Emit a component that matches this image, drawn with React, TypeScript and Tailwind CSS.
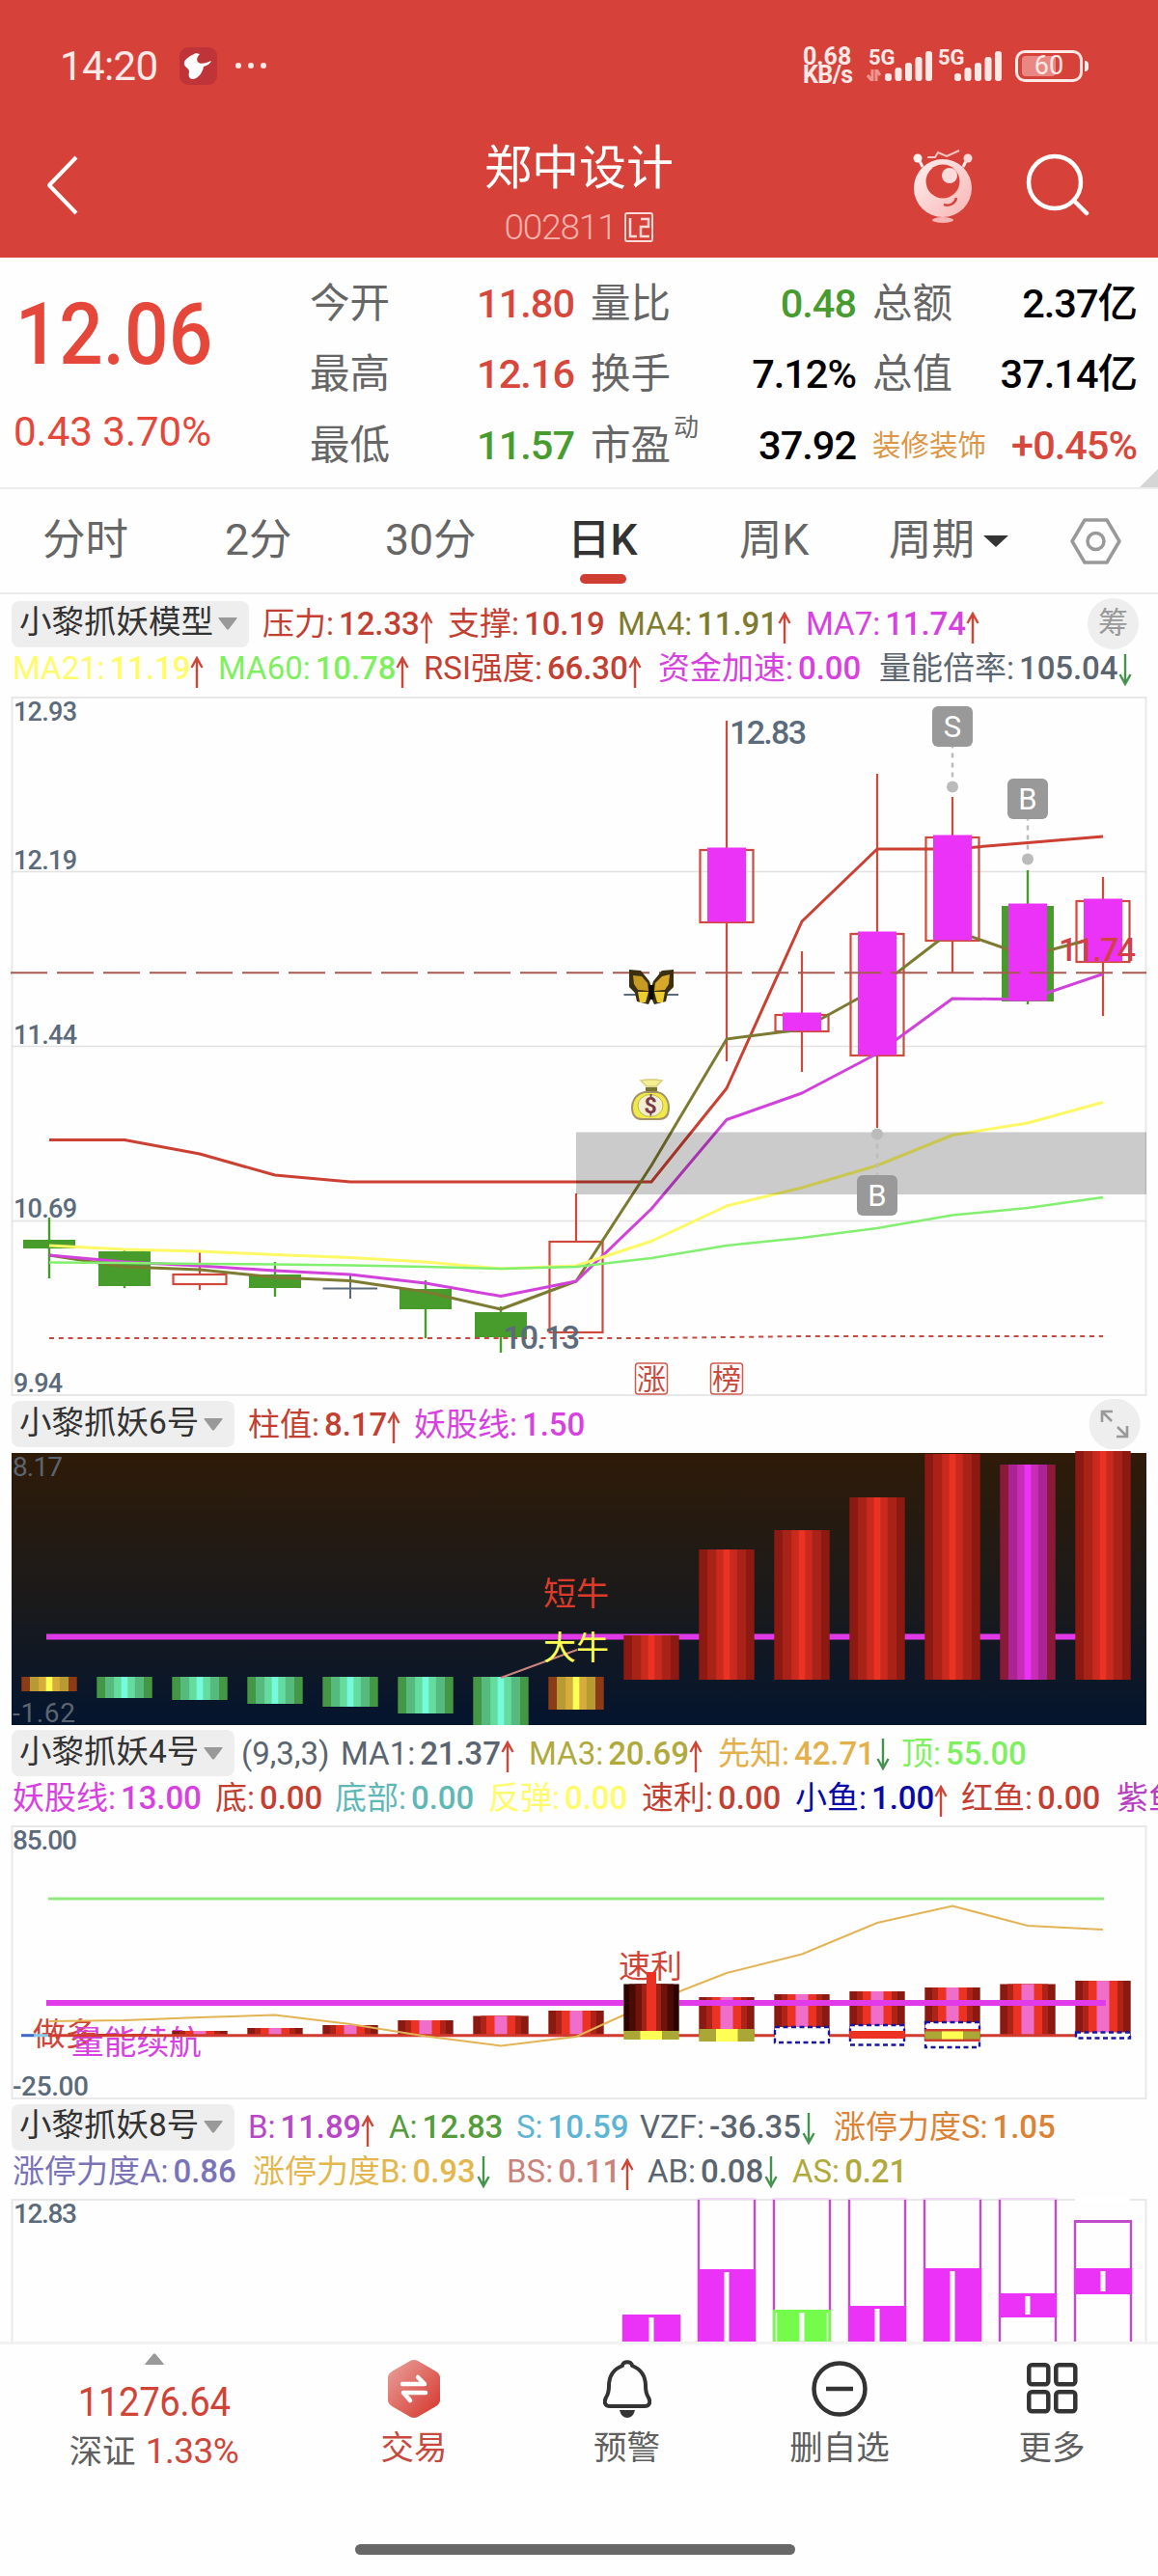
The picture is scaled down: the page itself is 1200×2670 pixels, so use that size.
import type { ReactNode } from "react";

const FONT = "font-[Roboto,'Noto_Sans_CJK_SC',sans-serif]";

type Indicator = {
  label: string;
  value?: string;
  color: string;
  width: string;
  trend?: "up" | "down";
};

const mainRow1: Indicator[] = [
  { label: "压力", value: "12.33", color: "text-[#c23f31]", width: "w-[192px]", trend: "up" },
  { label: "支撑", value: "10.19", color: "text-[#c23f31]", width: "w-[176px]" },
  { label: "MA4", value: "11.91", color: "text-[#7f7b2e]", width: "w-[195px]", trend: "up" },
  { label: "MA7", value: "11.74", color: "text-[#d641df]", width: "w-[200px]", trend: "up" },
];

const mainRow2: Indicator[] = [
  { label: "MA21", value: "11.19", color: "text-[#fffb6a]", width: "w-[213px]", trend: "up" },
  { label: "MA60", value: "10.78", color: "text-[#7ef060]", width: "w-[213px]", trend: "up" },
  { label: "RSI强度", value: "66.30", color: "text-[#c23f31]", width: "w-[243px]", trend: "up" },
  { label: "资金加速", value: "0.00", color: "text-[#d641df]", width: "w-[229px]" },
  { label: "量能倍率", value: "105.04", color: "text-[#5b6570]", width: "w-[270px]", trend: "down" },
];

const sixRow: Indicator[] = [
  { label: "柱值", value: "8.17", color: "text-[#c23f31]", width: "w-[172px]", trend: "up" },
  { label: "妖股线", value: "1.50", color: "text-[#d641df]", width: "w-[190px]" },
];

const fourRow1: Indicator[] = [
  { label: "(9,3,3)", color: "text-[#5b6570]", width: "w-[103px]" },
  { label: "MA1", value: "21.37", color: "text-[#5b6570]", width: "w-[195px]", trend: "up" },
  { label: "MA3", value: "20.69", color: "text-[#b0a93c]", width: "w-[196px]", trend: "up" },
  { label: "先知", value: "42.71", color: "text-[#e3b04b]", width: "w-[190px]", trend: "down" },
  { label: "顶", value: "55.00", color: "text-[#7ef060]", width: "w-[140px]" },
];

const fourRow2: Indicator[] = [
  { label: "妖股线", value: "13.00", color: "text-[#d641df]", width: "w-[210px]" },
  { label: "底", value: "0.00", color: "text-[#c23f31]", width: "w-[124px]" },
  { label: "底部", value: "0.00", color: "text-[#5fb8b5]", width: "w-[159px]" },
  { label: "反弹", value: "0.00", color: "text-[#fffb6a]", width: "w-[159px]" },
  { label: "速利", value: "0.00", color: "text-[#c23f31]", width: "w-[159px]" },
  { label: "小鱼", value: "1.00", color: "text-[#0a0aa5]", width: "w-[172px]", trend: "up" },
  { label: "红鱼", value: "0.00", color: "text-[#c23f31]", width: "w-[161px]" },
  { label: "紫鱼", color: "text-[#b83fc4]", width: "w-[161px]" },
];

const eightRow1: Indicator[] = [
  { label: "B", value: "11.89", color: "text-[#b946c6]", width: "w-[146px]", trend: "up" },
  { label: "A", value: "12.83", color: "text-[#569c3d]", width: "w-[132px]" },
  { label: "S", value: "10.59", color: "text-[#5db5d3]", width: "w-[128px]" },
  { label: "VZF", value: "-36.35", color: "text-[#5b6570]", width: "w-[201px]", trend: "down" },
  { label: "涨停力度S", value: "1.05", color: "text-[#dc8234]", width: "w-[240px]" },
];

const eightRow2: Indicator[] = [
  { label: "涨停力度A", value: "0.86", color: "text-[#7b73b8]", width: "w-[249px]" },
  { label: "涨停力度B", value: "0.93", color: "text-[#e3b74e]", width: "w-[263px]", trend: "down" },
  { label: "BS", value: "0.11", color: "text-[#cb827a]", width: "w-[146px]", trend: "up" },
  { label: "AB", value: "0.08", color: "text-[#5b6570]", width: "w-[150px]", trend: "down" },
  { label: "AS", value: "0.21", color: "text-[#b0a93c]", width: "w-[130px]" },
];

// centre of the n-th trading day column
const cx = (i: number) => 51 + 78 * i;

const toPoints = (ys: number[]) => ys.map((y, i) => `${cx(i)},${y}`).join(" ");

function TrendArrow({ trend }: { trend: "up" | "down" }) {
  return trend === "up" ? (
    <svg width="14" height="34" viewBox="0 0 14 34" fill="none" stroke="#cf4537" strokeWidth="2.4" className="mt-2 shrink-0">
      <path d="M7 33V2M1.5 12L7 2L12.5 12" />
    </svg>
  ) : (
    <svg width="14" height="34" viewBox="0 0 14 34" fill="none" stroke="#469350" strokeWidth="2.4" className="ml-px mt-1 shrink-0">
      <path d="M7 0V31M1.5 21L7 31L12.5 21" />
    </svg>
  );
}

function IndicatorItem({ item }: { item: Indicator }) {
  return (
    <div className={`flex h-[46px] shrink-0 items-center whitespace-nowrap ${item.width} ${item.color}`}>
      <span>{item.value ? `${item.label}:` : item.label}</span>
      {item.value && <span className="ml-[5px] font-medium tracking-[-0.1px]">{item.value}</span>}
      {item.trend && <TrendArrow trend={item.trend} />}
    </div>
  );
}

function Chip({ name, wide }: { name: string; wide?: boolean }) {
  return (
    <div
      className={`mr-[14px] flex h-12 shrink-0 items-center gap-[5px] rounded-lg bg-[#eee] pl-[8px] text-[#333] ${
        wide ? "w-[246px]" : "w-[231px]"
      }`}
    >
      <span className="whitespace-nowrap pb-[3px] text-[33.5px]">{name}</span>
      <svg width="20" height="13" viewBox="0 0 20 13" fill="#999">
        <path d="M1 0H19Q20 0 19.5 1L11 12.2Q10 13 9 12.2L.5 1Q0 0 1 0Z" />
      </svg>
    </div>
  );
}

function Legend({ className, children }: { className: string; children: ReactNode }) {
  return <div className={`overflow-hidden pl-3 text-[33px] leading-none ${className}`}>{children}</div>;
}

function Signal() {
  return (
    <svg width="49" height="31" viewBox="0 0 49 31" fill="#ffe9e7">
      <rect x="0" y="23" width="7" height="8" rx="3" />
      <rect x="10.5" y="17" width="7" height="14" rx="3" />
      <rect x="21" y="12" width="7" height="19" rx="3" />
      <rect x="31.5" y="6" width="7" height="25" rx="3" />
      <rect x="42" y="0" width="7" height="31" rx="3" />
    </svg>
  );
}

function StatusBar() {
  return (
    <div className="flex h-[136px] items-center pl-[62px] text-[#ffe9e7]">
      <span className="w-[124px] text-[42px] tracking-[-0.6px]">14:20</span>
      <svg width="39" height="39" viewBox="0 0 39 39">
        <rect width="39" height="39" rx="9" fill="#bf3438" />
        <path d="M17 6C9 10 4 13 5 18c1 3 5 4 5 7-1 5 0 8 4 8 6-1 10-7 11-13 4-1 7-3 8-6-5 2-10 4-13 2-3-2-2-6 1-9Z" fill="#fff" />
      </svg>
      <div className="ml-[19px] flex gap-[7px]">
        <i className="size-[6px] rounded-full bg-[#ffe9e7]" />
        <i className="size-[6px] rounded-full bg-[#ffe9e7]" />
        <i className="size-[6px] rounded-full bg-[#ffe9e7]" />
      </div>
      <div className="ml-[556px] w-[65px] text-[25px] font-bold leading-[19px]">
        <div>0.68</div>
        <div className="tracking-[-0.6px]">KB/s</div>
      </div>
      <div className="relative ml-[20px] w-[49px]">
        <Signal />
        <span className="absolute -left-[17px] -top-[4px] text-[22px] font-bold leading-[22px]">5G</span>
        <svg width="15" height="12" viewBox="0 0 15 12" className="absolute -left-[19px] bottom-0" fill="none" stroke="#ee9590" strokeWidth="3">
          <path d="M6 0V12L1 6M10 12V0L14 6" />
        </svg>
      </div>
      <div className="relative ml-[23px] w-[49px]">
        <Signal />
        <span className="absolute -left-[17px] -top-[4px] text-[22px] font-bold leading-[22px]">5G</span>
      </div>
      <div className="relative ml-[14px] flex h-[33px] w-[70px] items-center justify-center rounded-[10px] border-[3px] border-[#ffe9e7]">
        <i className="absolute left-[4px] top-[3px] h-[21px] w-[35px] rounded-[4px] bg-[#e98782]" />
        <span className="relative text-[27px] leading-none">60</span>
      </div>
      <i className="ml-[2px] h-[11px] w-[4px] rounded-r bg-[#ffe9e7]" />
    </div>
  );
}

function Mascot() {
  return (
    <svg width="64" height="78" viewBox="0 0 64 78">
      <defs>
        <linearGradient id="mascot" x1="0" y1="0" x2="1" y2="1">
          <stop offset="0" stopColor="#fff1f0" />
          <stop offset="1" stopColor="#f7b5b4" />
        </linearGradient>
      </defs>
      <path d="M16 8L24 8L27 3L36 7L49 1" fill="none" stroke="#f9c6c3" strokeWidth="2" />
      <path d="M6 8L11 18M58 8L53 18" stroke="#fdeceb" strokeWidth="3" />
      <ellipse cx="6" cy="9" rx="4.5" ry="4.5" fill="#fff1f0" />
      <ellipse cx="58" cy="9" rx="4.5" ry="4.5" fill="#fdd9d7" />
      <circle cx="32" cy="40" r="30" fill="url(#mascot)" />
      <circle cx="32" cy="33" r="17.5" fill="#d7443c" />
      <circle cx="39" cy="27" r="8" fill="#fbdcdb" />
      <path d="M33 57C39 59 45 56 46 50" fill="none" stroke="#d7443c" strokeWidth="2.5" />
      <ellipse cx="32" cy="73" rx="11" ry="3" fill="#f7b5b4" />
    </svg>
  );
}

function TitleBar() {
  return (
    <div className="flex h-[131px] items-center text-white">
      <svg width="33" height="62" viewBox="0 0 33 62" fill="none" stroke="#fff" strokeWidth="4" className="ml-12 mt-[-20px]">
        <path d="M31 2L3 31L31 60" strokeLinejoin="round" />
      </svg>
      <div className="ml-[361px] w-[316px]">
        <div className="flex flex-col items-center">
          <h1 className="mt-[-5px] text-[49px] leading-[60px]">郑中设计</h1>
          <div className="mt-[12px] flex items-center text-[#f4b0ab]">
            <span className="text-[37px] font-light leading-none tracking-[-1.2px]">002811</span>
            <svg width="30" height="31" viewBox="0 0 30 31" fill="none" stroke="#fbdad7" className="ml-[9px]">
              <rect x="1" y="1" width="28" height="29" rx="2" strokeWidth="2" />
              <path d="M6 6V25H13M17 7H25V15H17V25H26" strokeWidth="2.5" />
            </svg>
          </div>
        </div>
      </div>
      <div className="ml-auto mr-[54px] mt-[-15px]">
        <Mascot />
      </div>
      <svg width="66" height="66" viewBox="0 0 66 66" fill="none" stroke="#fff" strokeWidth="4.5" className="mr-[71px] mt-[-19px]">
        <circle cx="30" cy="30" r="27" />
        <path d="M50 49L63 62" strokeLinecap="round" />
      </svg>
    </div>
  );
}

const quotes = [
  { rows: ["今开", "最高", "最低"], values: ["11.80", "12.16", "11.57"], colors: ["text-[#d8473b]", "text-[#d8473b]", "text-[#489c2f]"], box: "w-[274px]" },
  { rows: ["量比", "换手", "市盈"], values: ["0.48", "7.12%", "37.92"], colors: ["text-[#489c2f]", "text-black", "text-black"], box: "w-[275px]" },
  { rows: ["总额", "总值", "装修装饰"], values: ["2.37亿", "37.14亿", "+0.45%"], colors: ["text-black", "text-black", "text-[#d8473b]"], box: "w-[274px]" },
];

function QuotePanel() {
  return (
    <section className="relative flex h-[240px] border-b-2 border-[#ebebeb]">
      <div className="w-[321px] pl-[14px] text-[#e5473a]">
        <div className="mt-[30px] w-[230px] origin-left scale-x-[0.9] pl-[2px] text-[89px] font-medium leading-[100px]">12.06</div>
        <div className="mt-[26px] whitespace-nowrap text-[42px] leading-[50px]">0.43 3.70%</div>
      </div>
      <div className="flex gap-[17px] pt-[11px]">
        {quotes.map((col) => (
          <div key={col.rows[0]} className={col.box}>
            {col.rows.map((label, i) => (
              <div key={label} className="flex h-[73.5px] items-center justify-between whitespace-nowrap text-[41.5px]">
                {label.length > 2 ? (
                  <span className="text-[29.5px] text-[#dc9646]">{label}</span>
                ) : (
                  <span className="flex text-[#666]">
                    {label}
                    {label === "市盈" && <sup className="top-[12px] ml-[3px] text-[26px]">动</sup>}
                  </span>
                )}
                <span className={`font-medium tracking-[-1px] ${col.colors[i]}`}>{col.values[i]}</span>
              </div>
            ))}
          </div>
        ))}
      </div>
      <svg width="19" height="19" viewBox="0 0 19 19" className="absolute bottom-0 right-0">
        <path d="M19 0V19H0Z" fill="#d5d5d5" />
      </svg>
    </section>
  );
}

const tabs = [
  { name: "分时", width: "w-[189px]" },
  { name: "2分", width: "w-[166px]" },
  { name: "30分", width: "w-[189px]" },
  { name: "日K", width: "w-[178px]" },
  { name: "周K", width: "w-[155px]" },
  { name: "周期", width: "w-[98px]" },
];

function Tabs() {
  return (
    <nav className="flex h-[109px] items-center border-b-2 border-[#ebebeb] pl-[44px] text-[44.5px] text-[#666]">
      {tabs.map((tab) => (
        <div key={tab.name} className={`relative whitespace-nowrap ${tab.width} ${tab.name === "日K" ? "font-medium text-[#333]" : ""}`}>
          {tab.name}
          {tab.name === "日K" && <i className="absolute left-[13px] top-[68px] h-[10px] w-12 rounded-[5px] bg-[#d03d33]" />}
        </div>
      ))}
      <svg width="26" height="12" viewBox="0 0 26 12" fill="#333">
        <path d="M0 0H26L13 12Z" />
      </svg>
      <svg width="53" height="48" viewBox="0 0 53 48" fill="none" stroke="#999" strokeWidth="3.5" className="ml-[64px]">
        <path d="M15 2H38L51 24L38 46H15L2 24Z" strokeLinejoin="round" />
        <circle cx="26.5" cy="24" r="8.5" />
      </svg>
    </nav>
  );
}

type Candle = { wick: [number, number]; body: [number, number]; kind: "green" | "hollow" | "magenta" | "flat" | "mixed" };

const candles: Candle[] = [
  { wick: [1262, 1325], body: [1285, 1294], kind: "green" },
  { wick: [1294, 1335], body: [1297, 1333], kind: "green" },
  { wick: [1298, 1337], body: [1321, 1331], kind: "hollow" },
  { wick: [1308, 1344], body: [1321, 1335], kind: "green" },
  { wick: [1322, 1346], body: [1335.5, 1336], kind: "flat" },
  { wick: [1327, 1387], body: [1336, 1357], kind: "green" },
  { wick: [1354, 1402], body: [1360, 1386], kind: "green" },
  { wick: [1237, 1287], body: [1287, 1381], kind: "hollow" },
  { wick: [1031, 1031], body: [1031, 1031], kind: "flat" },
  { wick: [747, 1100], body: [881, 956], kind: "magenta" },
  { wick: [986, 1111], body: [1052, 1069], kind: "magenta" },
  { wick: [802, 1169], body: [968, 1094], kind: "magenta" },
  { wick: [826, 1008], body: [868, 975], kind: "magenta" },
  { wick: [902, 1041], body: [939, 1038], kind: "mixed" },
  { wick: [909, 1053], body: [934, 997], kind: "magenta" },
];

const pressure = [1181.5, 1181.5, 1196, 1218, 1225, 1225, 1225, 1225, 1225, 1128, 955, 880, 880, 873.5, 867];
const ma4 = [1301, 1313, 1316, 1324, 1327.5, 1339, 1357, 1328, 1208, 1077, 1067, 1024, 964, 991, 970];
const ma7 = [1301, 1308, 1312, 1317, 1321, 1330, 1343.5, 1328, 1253, 1160.5, 1133, 1092, 1035, 1036, 1009.5];
const ma21 = [1291, 1295, 1297, 1300.5, 1303.5, 1308, 1315, 1312, 1286.5, 1250, 1231, 1208, 1176.5, 1164, 1142.5];
const ma60 = [1308.5, 1309, 1310, 1310.5, 1311.5, 1313, 1315, 1313, 1304, 1291, 1283, 1273, 1259.5, 1252, 1241];
const support = [1387, 1387, 1387, 1387, 1387, 1387, 1387, 1387, 1387, 1386, 1385, 1385, 1385, 1385, 1385];

const axisLabels = [
  { text: "12.93", y: 747 },
  { text: "12.19", y: 900.5 },
  { text: "11.44", y: 1082 },
  { text: "10.69", y: 1261.5 },
];

const marks = [
  { letter: "S", day: 12, y: 753, dot: 815.5 },
  { letter: "B", day: 13, y: 828, dot: 890.5 },
  { letter: "B", day: 11, y: 1239, dot: 1175.5 },
];

function CandleShape({ candle, x }: { candle: Candle; x: number }) {
  const [top, bottom] = candle.body;
  const [high, low] = candle.wick;
  if (candle.kind === "green" || candle.kind === "mixed") {
    return (
      <g fill="#489c2b">
        <rect x={x - 1.2} y={high} width="2.4" height={low - high} />
        <rect x={x - 27} y={top} width="54" height={bottom - top} />
      </g>
    );
  }
  if (candle.kind === "flat") {
    return (
      <g stroke="#5b6b7b" strokeWidth="2">
        <path d={`M${x - 28.5} ${top}H${x + 28}M${x} ${high}V${low}`} />
      </g>
    );
  }
  return (
    <g stroke="#cf4a3d" strokeWidth="2.2" fill="none">
      <path d={`M${x} ${high}V${top}M${x} ${bottom}V${Math.max(low, bottom)}`} />
      <rect x={x - 27.5} y={top} width="55" height={bottom - top} />
    </g>
  );
}

function Butterfly() {
  return (
    <g>
      <path d="M652 1005L664 1006L673 1017L677 1030L672 1041L660 1038L658 1029L652 1023Z" fill="#3a2f10" />
      <path d="M698 1005L686 1006L677 1017L673 1030L678 1041L690 1038L692 1029L698 1023Z" fill="#3a2f10" />
      <path d="M656 1011L665 1012L671 1019L672 1027L661 1026L657 1020Z" fill="#c79a23" />
      <path d="M694 1010L686 1012L679 1019L678 1027L689 1026L693 1020Z" fill="#d8a928" />
      <path d="M661 1028H672L669 1039H663ZM689 1028H678L681 1039H687Z" fill="#eccd31" />
      <path d="M672.5 1021H677.5V1036H672.5Z" fill="#0d0b05" />
    </g>
  );
}

function MoneyBag() {
  return (
    <g>
      <path d="M664 1120L670 1126H680L686 1120L680 1119H670Z" fill="#f6ee93" stroke="#d8cd78" strokeWidth="1.5" />
      <path d="M669 1129H681" stroke="#77752f" strokeWidth="4" />
      <path d="M668 1132C658 1134 655 1142 655 1148C655 1156 659 1160 665 1160H683C690 1160 693 1155 693 1148C693 1140 688 1133 681 1132Z" fill="#f0e94c" stroke="#a69365" strokeWidth="2" />
      <ellipse cx="674" cy="1146" rx="13" ry="11.5" fill="#f3edd3" stroke="#c3ba41" />
      <text x="674" y="1154" textAnchor="middle" fontSize="23" fontWeight="700" fill="#7b3a48">
        $
      </text>
    </g>
  );
}

function KLineChart() {
  return (
    <svg width="1200" height="731" viewBox="0 719 1200 731" className="block">
      <rect x="12.5" y="723" width="1175" height="723" fill="none" stroke="#e8e8e8" strokeWidth="2" />
      <path d="M12 903.5H1188M12 1084.5H1188M12 1265.5H1188" stroke="#e2e2e2" strokeWidth="1.5" />
      <g fontSize="27" fill="#5b6b7b" fontWeight="500">
        {axisLabels.map((l) => (
          <text key={l.text} x="14" y={l.y} textLength="66">
            {l.text}
          </text>
        ))}
        <text x="14" y="1443" textLength="51">
          9.94
        </text>
      </g>
      {candles.map((c, i) => (
        <CandleShape key={i} candle={c} x={cx(i)} />
      ))}
      <g fill="none" strokeWidth="3" strokeLinejoin="round">
        <polyline points={toPoints(pressure)} stroke="#cb4033" />
        <polyline points={toPoints(ma4)} stroke="#7d7a31" />
        <polyline points={toPoints(ma7)} stroke="#d142da" />
        <polyline points={toPoints(ma21)} stroke="#fdf966" />
        <polyline points={toPoints(ma60)} stroke="#83ef70" strokeWidth="2.4" />
        <polyline points={toPoints(support)} stroke="#c8493d" strokeWidth="2" strokeDasharray="5 4.8" />
      </g>
      {candles.map((c, i) =>
        c.kind === "magenta" || c.kind === "mixed" ? (
          <rect key={i} x={cx(i) - 20} y={c.body[0] - 2.5} width="40" height={c.body[1] - c.body[0] + 2} fill="#ea33f7" />
        ) : null,
      )}
      <rect x="597" y="1173.5" width="591" height="64.5" fill="#000" fillOpacity="0.2" />
      <path d="M11 1008.2H1188" stroke="#a65a50" strokeWidth="2" strokeDasharray="38 10" />
      <Butterfly />
      <MoneyBag />
      <g fontSize="34" fill="#5b6b7b" fontWeight="500">
        <text x="756" y="771" textLength="80">
          12.83
        </text>
        <text x="521" y="1397.5" textLength="80">
          10.13
        </text>
        <text x="1097" y="996" textLength="80" fill="#d23f45">
          11.74
        </text>
      </g>
      {marks.map((m) => (
        <g key={m.day}>
          <path d={`M${cx(m.day)} ${m.dot}V${m.y}`} stroke="#bdbdbd" strokeWidth="2.5" strokeDasharray="5 5" />
          <circle cx={cx(m.day)} cy={m.dot} r="6" fill="#bbb" />
          <rect x={cx(m.day) - 21} y={m.y - 21} width="42" height="42" rx="6" fill="#999" />
          <text x={cx(m.day)} y={m.y + 11} textAnchor="middle" fontSize="31" fill="#fff">
            {m.letter}
          </text>
        </g>
      ))}
      <g fill="none" stroke="#cf5a4e" strokeWidth="1.5">
        <rect x="658.5" y="1413" width="33" height="32" rx="3" />
        <rect x="736.5" y="1413" width="33" height="32" rx="3" />
      </g>
      <g fontSize="30" fill="#c8493d" textAnchor="middle">
        <text x="675" y="1440">
          涨
        </text>
        <text x="753" y="1440">
          榜
        </text>
      </g>
    </svg>
  );
}

const stripes = {
  red: ["#8c1a12", "#a92218", "#c92a1d", "#ea3323"],
  magenta: ["#8b1a38", "#ab2495", "#c92db8", "#ea33f7"],
  green: ["#449845", "#56b97e", "#65dc9f", "#75fbdb"],
  yellow: ["#8c3b17", "#b79a31", "#d6ad3b", "#ffff54"],
};

const columns: { top: number; bottom: number; tone: keyof typeof stripes }[] = [
  { top: 1738, bottom: 1753, tone: "yellow" },
  { top: 1738, bottom: 1760, tone: "green" },
  { top: 1738, bottom: 1762, tone: "green" },
  { top: 1738, bottom: 1766, tone: "green" },
  { top: 1738, bottom: 1769, tone: "green" },
  { top: 1738, bottom: 1776, tone: "green" },
  { top: 1738, bottom: 1788, tone: "green" },
  { top: 1738, bottom: 1772, tone: "yellow" },
  { top: 1695, bottom: 1741, tone: "red" },
  { top: 1606, bottom: 1741, tone: "red" },
  { top: 1586, bottom: 1741, tone: "red" },
  { top: 1552, bottom: 1741, tone: "red" },
  { top: 1507, bottom: 1741, tone: "red" },
  { top: 1518, bottom: 1741, tone: "magenta" },
  { top: 1504, bottom: 1741, tone: "red" },
];

function ColumnChart() {
  const halves = [28.7, 20, 10.8, 3.3];
  return (
    <svg width="1200" height="288" viewBox="0 1502 1200 288" className="block">
      <defs>
        <linearGradient id="night" x1="0" y1="0" x2="0" y2="1">
          <stop offset="0" stopColor="#2f1b08" />
          <stop offset="0.55" stopColor="#1a1a1b" />
          <stop offset="1" stopColor="#04152f" />
        </linearGradient>
      </defs>
      <rect x="12" y="1506" width="1176" height="282" fill="url(#night)" />
      <g fontSize="28" fill="#5b6570">
        <text x="13" y="1530" textLength="52">
          8.17
        </text>
        <text x="13" y="1785" textLength="65">
          -1.62
        </text>
      </g>
      <path d="M48 1696.5H1143" stroke="#e03ae8" strokeWidth="6" />
      {columns.map((c, i) => (
        <g key={i}>
          {halves.map((h, n) => (
            <rect key={h} x={cx(i) - h} y={c.top} width={h * 2} height={c.bottom - c.top} fill={stripes[c.tone][n]} />
          ))}
        </g>
      ))}
      <path d="M519 1739L598 1710" stroke="#c9857d" strokeWidth="2" />
      <g fontSize="34">
        <text x="563" y="1663.5" fill="#dc3b2c">
          短牛
        </text>
        <text x="563" y="1720" fill="#ffff54">
          大牛
        </text>
      </g>
      <rect x="12" y="1788" width="1176" height="2" fill="#fff" />
    </svg>
  );
}

const foresight = [2095, 2094, 2091, 2088.5, 2098, 2110.5, 2120.5, 2111, 2075.5, 2045, 2025.5, 1993, 1975.5, 1996, 2000];
const drumTops = [0, 2108, 2105, 2102, 2099, 2094, 2089.5, 2084, 0, 2070, 2067, 2064, 2060, 2056.5, 2053];

function DrumChart() {
  return (
    <svg width="1200" height="288" viewBox="0 1890 1200 288" className="block">
      <rect x="12.5" y="1893" width="1175" height="282" fill="none" stroke="#e8e8e8" strokeWidth="2" />
      <g fontSize="28" fill="#5b6b7b" fontWeight="500">
        <text x="13" y="1917" textLength="67">
          85.00
        </text>
        <text x="13" y="2171.5" textLength="79">
          -25.00
        </text>
      </g>
      <path d="M50 1968H1144" stroke="#8fe97f" strokeWidth="3" />
      <text x="34" y="2120" fontSize="33.5" fill="#cf4436">
        做多
      </text>
      <text x="74" y="2129" fontSize="33.7" fill="#d641df">
        量能续航
      </text>
      {drumTops.map((top, i) =>
        top ? (
          <g key={i}>
            <rect x={cx(i) - 28.7} y={top} width="57.4" height={2110.5 - top} fill="#8a1a11" />
            <rect x={cx(i) - 21} y={top} width="42" height={2110.5 - top} fill="#ad2318" />
            <rect x={cx(i) - 15} y={top} width="30" height={2110.5 - top} fill="#ea3323" />
            <rect x={cx(i) - 6.5} y={top} width="13" height={2110.5 - top} fill="#ee6ec9" />
          </g>
        ) : null,
      )}
      <path d="M50 2109.7H1143" stroke="#cf3b2f" strokeWidth="3" />
      <path d="M22 2109.7H37" stroke="#3f67c6" strokeWidth="3" />
      <path d="M35 2109.7H50" stroke="#85cbe6" strokeWidth="3" />
      <polyline points={toPoints(foresight)} fill="none" stroke="#e3b455" strokeWidth="2" />
      <text x="641" y="2050" fontSize="33" fill="#cf4436">
        速利
      </text>
      <g>
        <rect x="646.3" y="2056.5" width="57.4" height="49" fill="#2b0300" />
        <rect x="652" y="2056.5" width="46" height="49" fill="#4a0a04" />
        <rect x="658.5" y="2056.5" width="33" height="49" fill="#6f130c" />
        <rect x="665" y="2056.5" width="20" height="49" fill="#a32016" />
        <rect x="670" y="2044" width="10" height="61" fill="#ea3323" />
      </g>
      <path d="M48 2076H646M704 2076H1146" stroke="#e13be9" strokeWidth="6" />
      <rect x="646.3" y="2105" width="57.4" height="9" fill="#aba736" />
      <rect x="663.5" y="2105" width="22.5" height="9" fill="#ffff54" />
      <rect x="724.3" y="2103" width="57.4" height="13" fill="#aba736" />
      <rect x="742" y="2103" width="22.5" height="13" fill="#ffff54" />
      <g fill="#fff" stroke="#1a15a0" strokeWidth="2.4" strokeDasharray="5 3.5">
        <rect x="803" y="2101" width="56" height="16" />
        <rect x="881" y="2099" width="56" height="20.5" />
        <rect x="959" y="2096" width="56" height="26" />
        <rect x="1115" y="2106.5" width="56" height="6" />
      </g>
      <rect x="880.3" y="2105" width="57.4" height="8" fill="#ea3323" />
      <rect x="958.3" y="2103" width="57.4" height="13" fill="#cf3b2f" />
      <rect x="958.3" y="2105.5" width="57.4" height="8" fill="#aba736" />
      <rect x="976" y="2105.5" width="22" height="8" fill="#ffff54" />
    </svg>
  );
}

const pillars: { day: number; frame: number; top: number; bottom: number; color: string }[] = [
  { day: 8, frame: 2400, top: 2399, bottom: 2430, color: "#ea33f7" },
  { day: 9, frame: 2279, top: 2352, bottom: 2430, color: "#ea33f7" },
  { day: 10, frame: 2279, top: 2394, bottom: 2430, color: "#75fb4c" },
  { day: 11, frame: 2279, top: 2390, bottom: 2430, color: "#ea33f7" },
  { day: 12, frame: 2279, top: 2351, bottom: 2430, color: "#ea33f7" },
  { day: 13, frame: 2279, top: 2377, bottom: 2402, color: "#ea33f7" },
  { day: 14, frame: 2302, top: 2351, bottom: 2378, color: "#ea33f7" },
];

function PillarChart() {
  return (
    <svg width="1200" height="151" viewBox="0 2276 1200 151" className="block">
      <path d="M12.5 2430V2280H1187.5V2430" fill="none" stroke="#e8e8e8" strokeWidth="2" />
      <path d="M1114 2280H1171" stroke="#fff" strokeWidth="4" />
      <text x="14" y="2304" fontSize="28" fill="#5b6b7b" fontWeight="500" textLength="66">
        12.83
      </text>
      {pillars.map((p) => (
        <g key={p.day}>
          <path
            d={`M${cx(p.day) - 29} 2430V${p.frame}M${cx(p.day) + 29} ${p.frame}V2430`}
            stroke="#c24bcb"
            strokeWidth="2.4"
          />
          <rect x={cx(p.day) - 30} y={p.top} width="60" height={p.bottom - p.top} fill={p.color} />
          <rect x={cx(p.day) - 2.5} y={p.top + 3} width="5" height={p.bottom - p.top - 6} fill="#fff" />
        </g>
      ))}
      <path d="M723 2279H783M801 2279H861M879 2279H939M957 2279H1017M1035 2279H1095" stroke="#f3d5f5" strokeWidth="2" />
      <path d="M1113 2302.5H1173" stroke="#c24bcb" strokeWidth="3" />
      <path d="M804.5 2397V2430M857.5 2397V2430" stroke="#e9fbe3" strokeWidth="1.5" />
    </svg>
  );
}

function BottomBar() {
  return (
    <footer className="flex h-[243px] flex-col border-t-[3px] border-[#f2f2f2]">
      <div className="flex h-[140px] text-[34.5px] text-[#5f5f5f]">
        <div className="flex w-[319px] flex-col items-center pt-[9px]">
          <svg width="20" height="12" viewBox="0 0 20 12" fill="#999">
            <path d="M9 .8Q10 -.4 11 .8L19.6 11Q20 12 19 12H1Q0 12 .4 11Z" />
          </svg>
          <div className="mt-[15px] scale-x-[0.89] text-[43px] leading-[46px] tracking-[-0.4px] text-[#cf4437]">11276.64</div>
          <div className="mt-[9px] flex gap-[10px] leading-[40px]">
            <span className="text-[34.5px]">深证</span>
            <span className="text-[37px] tracking-[-0.5px] text-[#d0463a]">1.33%</span>
          </div>
        </div>
        <div className="flex w-[220px] flex-col items-center pt-[16px] text-[#c8493d]">
          <svg width="54" height="60" viewBox="0 0 54 60">
            <defs>
              <linearGradient id="trade" x1="0" y1="0" x2="1" y2="1">
                <stop offset="0" stopColor="#e9a39e" />
                <stop offset="1" stopColor="#d53429" />
              </linearGradient>
            </defs>
            <path d="M23 1Q27 -1 31 1L50 12Q54 15 54 18V42Q54 45 50 48L31 59Q27 61 23 59L4 48Q0 45 0 42V18Q0 15 4 12Z" fill="url(#trade)" />
            <path d="M15 25H38L31 18M39 34H16L23 42" fill="none" stroke="#fff" strokeWidth="4.5" strokeLinejoin="round" strokeLinecap="round" />
          </svg>
          <span className="mt-[11px] leading-[40px]">交易</span>
        </div>
        <div className="flex w-[221px] flex-col items-center pt-[16px]">
          <svg width="50" height="60" viewBox="0 0 50 60" fill="none" stroke="#333" strokeWidth="4">
            <path d="M20 6C20 1 30 1 30 6C40 10 44 17 44 27C44 34 45 36 47 39C50 45 47 48 43 48H7C3 48 0 45 3 39C5 36 6 34 6 27C6 17 10 10 20 6Z" strokeLinejoin="round" />
            <path d="M17 52H33Q31 60 25 60Q19 60 17 52Z" fill="#333" stroke="none" />
          </svg>
          <span className="mt-[11px] leading-[40px]">预警</span>
        </div>
        <div className="flex w-[220px] flex-col items-center pt-[16px]">
          <svg width="60" height="60" viewBox="0 0 60 60" fill="none" stroke="#333" strokeWidth="4.5">
            <circle cx="30" cy="30" r="26.5" />
            <path d="M16 30H44" />
          </svg>
          <span className="mt-[11px] leading-[40px]">删自选</span>
        </div>
        <div className="flex w-[220px] flex-col items-center pt-[16px]">
          <svg width="54" height="60" viewBox="0 0 54 60" fill="none" stroke="#333" strokeWidth="4.5">
            <rect x="3.3" y="5.3" width="20" height="20" rx="3" />
            <rect x="31.3" y="5.3" width="20" height="20" rx="3" />
            <rect x="3.3" y="33.3" width="20" height="20" rx="3" />
            <rect x="31.3" y="33.3" width="20" height="20" rx="3" />
          </svg>
          <span className="mt-[11px] leading-[40px]">更多</span>
        </div>
      </div>
      <i className="ml-[368px] mt-[67px] h-[11px] w-[456px] rounded-full bg-[#686868]" />
    </footer>
  );
}

export default function App() {
  return (
    <main className={`h-[2670px] w-[1200px] overflow-hidden bg-[#fefefe] ${FONT}`}>
      <header className="h-[267px] bg-[#d6423a]">
        <StatusBar />
        <TitleBar />
      </header>
      <QuotePanel />
      <Tabs />

      <Legend className="h-[103px] pt-[6px]">
        <div className="flex h-[49px] items-center">
          <Chip name="小黎抓妖模型" wide />
          {mainRow1.map((item) => (
            <IndicatorItem key={item.label} item={item} />
          ))}
          <div className="ml-[92px] flex size-[53px] shrink-0 items-center justify-center rounded-full bg-[#eee] pb-[2px] text-[31px] text-[#999]">筹</div>
        </div>
        <div className="flex h-[43px] items-center pl-px">
          {mainRow2.map((item) => (
            <IndicatorItem key={item.label} item={item} />
          ))}
        </div>
      </Legend>
      <KLineChart />

      <Legend className="flex h-[52px] items-center">
        <Chip name="小黎抓妖6号" />
        {sixRow.map((item) => (
          <IndicatorItem key={item.label} item={item} />
        ))}
        <svg width="54" height="54" viewBox="0 0 54 54" className="ml-[509px] shrink-0">
          <circle cx="27" cy="27" r="26.5" fill="#eee" />
          <path d="M14 25V14H25M15 15L24 24M40 29V40H29M39 39L30 30" fill="none" stroke="#999" strokeWidth="2.6" />
        </svg>
      </Legend>
      <ColumnChart />

      <Legend className="h-[100px] pt-[2px]">
        <div className="flex h-[50px] items-center">
          <div className="-mr-[7px] flex">
            <Chip name="小黎抓妖4号" />
          </div>
          {fourRow1.map((item) => (
            <IndicatorItem key={item.label} item={item} />
          ))}
        </div>
        <div className="flex h-[42px] items-center pl-px">
          {fourRow2.map((item) => (
            <IndicatorItem key={item.label} item={item} />
          ))}
        </div>
      </Legend>
      <DrumChart />

      <Legend className="h-[98px] pt-[2px]">
        <div className="flex h-[49px] items-center">
          <Chip name="小黎抓妖8号" />
          {eightRow1.map((item) => (
            <IndicatorItem key={item.label} item={item} />
          ))}
        </div>
        <div className="flex h-[42px] items-center pl-px">
          {eightRow2.map((item) => (
            <IndicatorItem key={item.label} item={item} />
          ))}
        </div>
      </Legend>
      <PillarChart />

      <BottomBar />
    </main>
  );
}
